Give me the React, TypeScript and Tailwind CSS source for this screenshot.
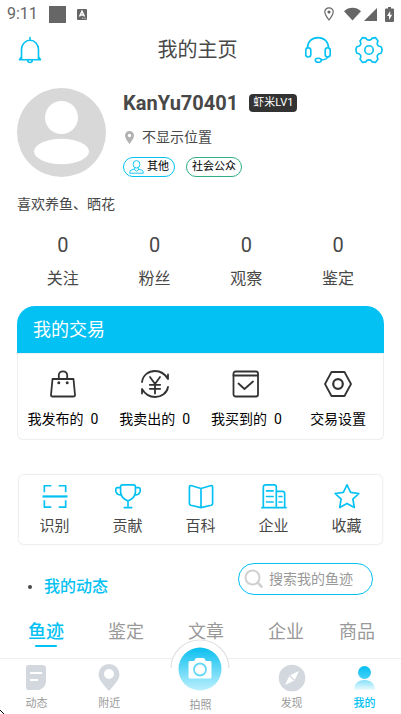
import type { ReactNode } from 'react';

const CYAN = '#03c1f3';

type IconProps = { children: ReactNode; size?: string; color?: string; width?: number };

function Line({ children, size = 'size-7', color = CYAN, width = 1.6 }: IconProps) {
  return (
    <svg
      viewBox="0 0 28 28"
      className={`${size} shrink-0`}
      fill="none"
      stroke={color}
      strokeWidth={width}
      strokeLinecap="round"
      strokeLinejoin="round"
      aria-hidden="true"
    >
      {children}
    </svg>
  );
}

function StatusBar() {
  return (
    <div className="flex h-7 items-center px-[7px] text-[#666]">
      <span className="text-base">9:11</span>
      <span className="ml-[11px] size-[17px] bg-[#666]" />
      <svg viewBox="0 0 10 11" className="ml-[11px] h-[11px] w-[10px]" aria-hidden="true">
        <rect width="10" height="11" rx="1" fill="#666" />
        <path d="M2.5 7.5 5 2.2l2.5 5.3M3.4 6h3.2" fill="none" stroke="#fff" strokeWidth="1.4" />
        <path d="M5 9.3h4" stroke="#fff" strokeWidth=".7" strokeDasharray="1 .6" />
      </svg>
      <svg viewBox="0 0 10 14" className="mr-[10px] ml-auto h-[14px] w-[10px]" fill="none" stroke="#666" aria-hidden="true">
        <path d="M5 13C2.500 9.800 .8 7.500.8 5a4.200 4.200 0 0 1 8.400 0c0 2.500-1.700 4.800-4.200 8Z" strokeWidth="1.200" />
        <circle cx="5" cy="5" r="1.600" fill="#666" stroke="none" />
      </svg>
      <svg viewBox="0 0 18 14" className="mr-[2px] h-[14px] w-[17px]" fill="#666" aria-hidden="true">
        <path d="M0 4C5-.8 13-.8 18 4L9 14Z" />
      </svg>
      <svg viewBox="0 0 14 14" className="mr-2 size-[14px]" fill="#666" aria-hidden="true">
        <path d="M14 1v13H1Z" />
      </svg>
      <svg viewBox="0 0 9 15" className="h-[15px] w-[9px]" aria-hidden="true">
        <path d="M3 0h3v1.500h2a1 1 0 0 1 1 1V14a1 1 0 0 1-1 1H1a1 1 0 0 1-1-1V2.500a1 1 0 0 1 1-1h2Z" fill="#666" />
        <path d="M5.200 4 2 9h2v4l3.200-5.200h-2Z" fill="#fff" />
      </svg>
    </div>
  );
}

function Header() {
  return (
    <header className="grid h-11 grid-cols-[1fr_auto_1fr] items-center pr-[18px] pl-3">
      <button type="button" aria-label="通知" className="ml-1 justify-self-start">
        <Line>
          <path d="M14 1.500V4M5.500 23V13.500a8.500 9.300 0 0 1 17 0V23M3.500 23.600 5.400 21M24.500 23.600 22.600 21M3.500 23.800h21M11.800 24.500a2.200 2 0 0 0 4.400 0" />
        </Line>
      </button>
      <h1 className="text-xl text-[#484848]">我的主页</h1>
      <div className="flex gap-[23px] justify-self-end">
        <button type="button" aria-label="客服">
          <Line>
            <path d="M3.500 12C3.500 5.500 8 1.600 14 1.600S24.500 5.500 24.500 12" />
            <rect x="1.800" y="11.800" width="5" height="9.200" rx="2.500" />
            <rect x="21.200" y="11.800" width="5" height="9.200" rx="2.500" />
            <path d="M24.300 20.500c-1 2-3.500 3.300-7 3.500" />
            <ellipse cx="14.300" cy="24.200" rx="3" ry="2" />
          </Line>
        </button>
        <button type="button" aria-label="设置">
          <Line>
            <circle cx="14" cy="14" r="4.200" />
            <path d="M7.400 1.600 11 2.100C11.700 4.800 16.300 4.800 17 2.100L20.600 1.600 23 5C21.300 8 22.500 10.500 26 10.800Q28.100 14 26 17.200C22.500 17.500 21.300 20 23 23L20.600 26.400 17 25.900C16.300 23.200 11.700 23.200 11 25.900L7.400 26.400 5 23C6.700 20 5.500 17.500 2 17.200Q-.1 14 2 10.800C5.500 10.500 6.700 8 5 5Z" />
          </Line>
        </button>
      </div>
    </header>
  );
}

function Profile() {
  return (
    <section className="px-[17px] pt-4 text-[#484848]">
      <div className="flex gap-[17px]">
        <svg viewBox="0 0 89 89" className="size-[89px] shrink-0" role="img" aria-label="头像">
          <circle cx="44.500" cy="44.500" r="44.500" fill="#d8d8d8" />
          <circle cx="44.500" cy="29.500" r="16.500" fill="#fff" />
          <ellipse cx="44.500" cy="63.500" rx="27.500" ry="12.700" fill="#fff" />
        </svg>
        <div>
          <div className="flex h-[30px] items-center">
            <h2 className="text-xl font-bold">KanYu70401</h2>
            <span className="ml-[11px] h-[18px] rounded bg-[#333] px-1 text-[11px] leading-[18px] text-white">虾米LV1</span>
          </div>
          <p className="mt-[7px] flex h-6 items-center text-sm">
            <svg viewBox="0 0 9 13" className="mr-2 ml-[2px] h-[13px] w-[9px]" aria-hidden="true">
              <path
                fillRule="evenodd"
                d="M4.500 13C2 9.500 0 7.200 0 4.500a4.500 4.500 0 0 1 9 0C9 7.200 7 9.500 4.500 13ZM4.500 2.800a1.700 1.700 0 1 0 0 3.400 1.700 1.700 0 0 0 0-3.400Z"
                fill="#b2b2b2"
              />
            </svg>
            不显示位置
          </p>
          <div className="mt-2 flex gap-[11px] text-[11px] text-black">
            <span className="flex h-5 items-center gap-[3px] rounded-full border border-[#03c1f3] px-[5px]">
              <svg viewBox="0 0 15 14" className="h-[14px] w-[15px]" fill="none" stroke={CYAN} strokeWidth=".9" strokeLinejoin="round" aria-hidden="true">
                <ellipse cx="7.500" cy="4.300" rx="3.400" ry="3.700" />
                <path d="M5.800 7.500v1.300L1.200 10.600.7 13.200H14.300L13.800 10.600 9.200 8.800V7.500M5 9.200l2.500 2L10 9.200" />
              </svg>
              其他
            </span>
            <span className="flex h-5 items-center rounded-full border border-[#2fae83] px-[5px]">社会公众</span>
          </div>
        </div>
      </div>
      <p className="mt-[15px] text-sm leading-6">喜欢养鱼、晒花</p>
    </section>
  );
}

function Stats() {
  return (
    <dl className="mt-[15px] grid grid-cols-4 px-[17px] text-center text-[#484848]">
      {['关注', '粉丝', '观察', '鉴定'].map((label) => (
        <div key={label} className="flex flex-col-reverse gap-2">
          <dt className="text-base leading-6">{label}</dt>
          <dd className="text-xl leading-7">0</dd>
        </div>
      ))}
    </dl>
  );
}

const trades: { label: string; count?: number; icon: ReactNode }[] = [
  {
    label: '我发布的',
    count: 0,
    icon: (
      <>
        <path d="M3.500 9h21l1.500 16q.1 1.500-1.500 1.500h-21Q1.900 26.500 2 25ZM9.800 9V5.300a4.200 4 0 0 1 8.400 0V9" />
        <path d="M9.800 12.700h.01M18.200 12.700h.01" strokeWidth="3" />
      </>
    ),
  },
  {
    label: '我卖出的',
    count: 0,
    icon: (
      <>
        <path d="M1 12C2 5 7.500 1 14 1c6 0 10 3 13 8V4.500M27 17c-1 6-6.500 10-13 10-6 0-10-3-13-8v4.500" />
        <path d="m9 7 5 7 5-7M14 14v9.500M8.800 14.800h10.400M8.800 18.800h10.400" />
      </>
    ),
  },
  {
    label: '我买到的',
    count: 0,
    icon: (
      <>
        <rect x="1.500" y="1.500" width="24.500" height="25" rx="2" />
        <path d="M1.500 5.500H26M6.500 13.500l6 5.500 8.500-7.500" />
      </>
    ),
  },
  {
    label: '交易设置',
    icon: (
      <>
        <path d="M7.500 2h13L27 14l-6.500 12h-13L1 14Z" />
        <circle cx="14" cy="14" r="4.800" strokeWidth="2.200" />
      </>
    ),
  },
];

function Trade() {
  return (
    <section className="mx-[17px] mt-[15px]">
      <h2 className="h-[47px] rounded-t-[18px] bg-[#03c1f3] px-4 text-lg leading-[47px] text-white">我的交易</h2>
      <div className="grid grid-cols-4 rounded-b-md pt-[17px] pb-[11px] shadow-[inset_0_0_0_1px_#eee]">
        {trades.map(({ label, count, icon }) => (
          <button key={label} type="button" className="flex flex-col items-center gap-[11px] text-sm whitespace-nowrap text-black">
            <Line color="#333" width={1.8}>{icon}</Line>
            <span className="flex gap-[7px]">
              {label}
              {count !== undefined && <span>{count}</span>}
            </span>
          </button>
        ))}
      </div>
    </section>
  );
}

const services: { label: string; icon: ReactNode }[] = [
  {
    label: '识别',
    icon: (
      <>
        <path d="M2.500 10V3H10M18 3h7.500v7M2.500 18.500v7.500H10M18 26h7.500v-7.500" strokeLinecap="butt" />
        <path d="M.5 14.500h27" strokeWidth="2.400" strokeLinecap="butt" />
      </>
    ),
  },
  {
    label: '贡献',
    icon: (
      <path d="M8 2h12q2 0 2 2v5.500c0 5-3.500 8-8 10-4.500-2-8-5-8-10V4q0-2 2-2ZM6 5H2.500Q.8 5 .8 7.500C.8 11 3.500 13 7 13M22 5h3.500q1.700 0 1.700 2.500c0 3.500-2.700 5.500-6.200 5.500M14 19.500V26M10 26.500h8" />
    ),
  },
  {
    label: '百科',
    icon: (
      <path d="M14 6v20.500M14 6 4 3Q1.500 2.300 1.500 4.500V22q0 1.500 1.500 2l11 2.500L25 24q1.500-.5 1.500-2V4.500q0-2.200-2.500-1.500Z" />
    ),
  },
  {
    label: '企业',
    icon: (
      <>
        <path d="M1 26.500h26M2.500 26V4.500q0-2.500 2.500-2.500h9q2.500 0 2.500 2.500V26M16.500 9H23q2.500 0 2.500 2.500V26" />
        <path d="M6 8.500h7M6 14.500h7M6 20.500h7M19.500 14.500h3M19.500 20.500h3" />
      </>
    ),
  },
  {
    label: '收藏',
    icon: <path d="m14 2 3.900 8.100 8.900 1.200-6.500 6.100 1.600 8.900L14 22l-7.900 4.300 1.600-8.900-6.500-6.100 8.900-1.200Z" />,
  },
];

function Services() {
  return (
    <section className="mx-[18px] mt-[34px] grid grid-cols-5 rounded-md pt-[9px] pb-[7px] shadow-[inset_0_0_0_1px_#f0f0f0,0_0_2px_#eee]">
      {services.map(({ label, icon }) => (
        <button key={label} type="button" className="flex flex-col items-center gap-[5px] text-[15px] leading-6 text-[#484848]">
          <Line size="size-[26px]" width={1.8}>{icon}</Line>
          {label}
        </button>
      ))}
    </section>
  );
}

function Feed() {
  return (
    <section className="mt-[18px] flex-1">
      <div className="flex h-9 items-end justify-between px-7">
        <h2 className="flex items-center gap-3 text-base leading-6 font-medium text-[#03c1f3]">
          <span className="size-1 rounded-full bg-[#484848]" />
          我的动态
        </h2>
        <label className="flex h-8 w-[135px] items-center gap-[5px] self-start rounded-full border border-[#03c1f3] pl-[5px]">
          <svg viewBox="0 0 20 20" className="size-5 shrink-0" fill="none" stroke="#d0d0d0" strokeWidth="2" aria-hidden="true">
            <circle cx="8.500" cy="8.500" r="7" />
            <path d="m13.500 13.500 4.800 4.800" strokeWidth="2.500" />
          </svg>
          <input type="search" aria-label="搜索" placeholder="搜索我的鱼迹" className="w-full min-w-0 text-sm outline-none placeholder:text-[#999]" />
        </label>
      </div>
      <div role="tablist" className="mt-5 flex items-start pr-[13px] pl-[6px] text-lg leading-[26px] text-[#999]">
        <button type="button" role="tab" aria-selected="true" className="flex flex-1 flex-col items-center font-medium text-[#03c1f3]">
          鱼迹
          <span className="h-[2px] w-[22px] rounded-full bg-[#03c1f3]" />
        </button>
        {['鉴定', '文章', '企业'].map((tab) => (
          <button key={tab} type="button" role="tab" aria-selected="false" className="flex flex-1 justify-center">
            {tab}
          </button>
        ))}
        <button type="button" role="tab" aria-selected="false" className="flex w-[62px] justify-center">
          商品
        </button>
      </div>
    </section>
  );
}

function BottomNav() {
  const item = 'flex flex-col items-center gap-1';
  return (
    <nav className="relative mt-[11px] grid h-14 grid-cols-[2fr_2fr_3fr_2fr_2fr] border-t border-[#eee] bg-white pt-[5px] text-[11px] leading-4 text-[#999]">
      <a href="#feed" className={item}>
        <svg viewBox="0 0 28 28" className="size-7" aria-hidden="true">
          <path d="M6 1h14q4 0 4 3v14q-1 6-7 8H6q-2 0-2-3V4q0-3 2-3Z" fill="#d3d8df" />
          <path d="M8 9h12M8 16h8" stroke="#fff" strokeWidth="2.200" />
        </svg>
        动态
      </a>
      <a href="#nearby" className={item}>
        <svg viewBox="0 0 28 28" className="size-7" aria-hidden="true">
          <path d="M14 27C8 20 3.500 15.500 3.500 10.500a10.500 10.500 0 0 1 21 0C24.500 15.500 20 20 14 27Z" fill="#d3d8df" />
          <circle cx="14" cy="10" r="5" fill="#fff" />
        </svg>
        附近
      </a>
      <a href="#camera" className="flex flex-col items-center justify-end">
        <svg viewBox="0 0 60 52" className="absolute -top-5 h-[52px] w-[60px]" aria-hidden="true">
          <defs>
            <linearGradient id="camera-fill" x1="0" y1="0" x2="0" y2="1">
              <stop stopColor="#0bbff0" />
              <stop offset="1" stopColor="#bdf0fd" />
            </linearGradient>
          </defs>
          <path d="M1 30a29 29 0 0 1 58 0l-7 20H8Z" fill="#fff" />
          <path d="M1 29a29 28 0 0 1 58 0" fill="none" stroke="#e2e2e2" strokeWidth="1.200" />
          <circle cx="30" cy="30" r="21.500" fill="url(#camera-fill)" />
          <path d="M20 22h4l2-3h8l2 3h4q1.500 0 1.500 1.500v14.500q0 1.500-1.500 1.500H20q-1.500 0-1.500-1.500V23.500Q18.500 22 20 22Z" fill="#fff" />
          <circle cx="30" cy="30.500" r="6" fill="none" stroke="#67d9f7" strokeWidth="1.800" />
        </svg>
        拍照
      </a>
      <a href="#discover" className={item}>
        <svg viewBox="0 0 28 28" className="size-7" aria-hidden="true">
          <circle cx="14" cy="14" r="13.300" fill="#d3d8df" />
          <path d="M21 7 16.500 16.500 7 21l4.500-9.500Z" fill="#fff" />
          <path d="m11.500 11.500 5 5" stroke="#d3d8df" strokeWidth="1.300" />
        </svg>
        发现
      </a>
      <a href="#mine" className={`${item} font-medium text-[#03c1f3]`} aria-current="page">
        <svg viewBox="0 0 28 28" className="size-7" aria-hidden="true">
          <defs>
            <linearGradient id="mine-head" x1="0" y1="0" x2="0" y2="1">
              <stop stopColor="#08bff2" />
              <stop offset="1" stopColor="#45d0f7" />
            </linearGradient>
            <linearGradient id="mine-body" x1="0" y1="0" x2="0" y2="1">
              <stop stopColor="#83dff8" />
              <stop offset="1" stopColor="#eefbff" />
            </linearGradient>
          </defs>
          <circle cx="13.500" cy="8.500" r="6.500" fill="url(#mine-head)" />
          <path d="M3 26c0-6 4-10 10.500-10S24 20 24 26Z" fill="url(#mine-body)" />
        </svg>
        我的
      </a>
      <svg viewBox="0 0 4 4" className="absolute bottom-0 left-0 size-1" aria-hidden="true">
        <path d="M0 0h1v1h1v1h1v1h1v1H3V3H2V2H1V1H0Z" fill="#000" />
      </svg>
    </nav>
  );
}

export default function App() {
  return (
    <div className="flex min-h-screen flex-col bg-white font-[Roboto,'Noto_Sans_CJK_SC',sans-serif]">
      <StatusBar />
      <Header />
      <main className="flex flex-1 flex-col">
        <Profile />
        <Stats />
        <Trade />
        <Services />
        <Feed />
      </main>
      <BottomNav />
    </div>
  );
}
